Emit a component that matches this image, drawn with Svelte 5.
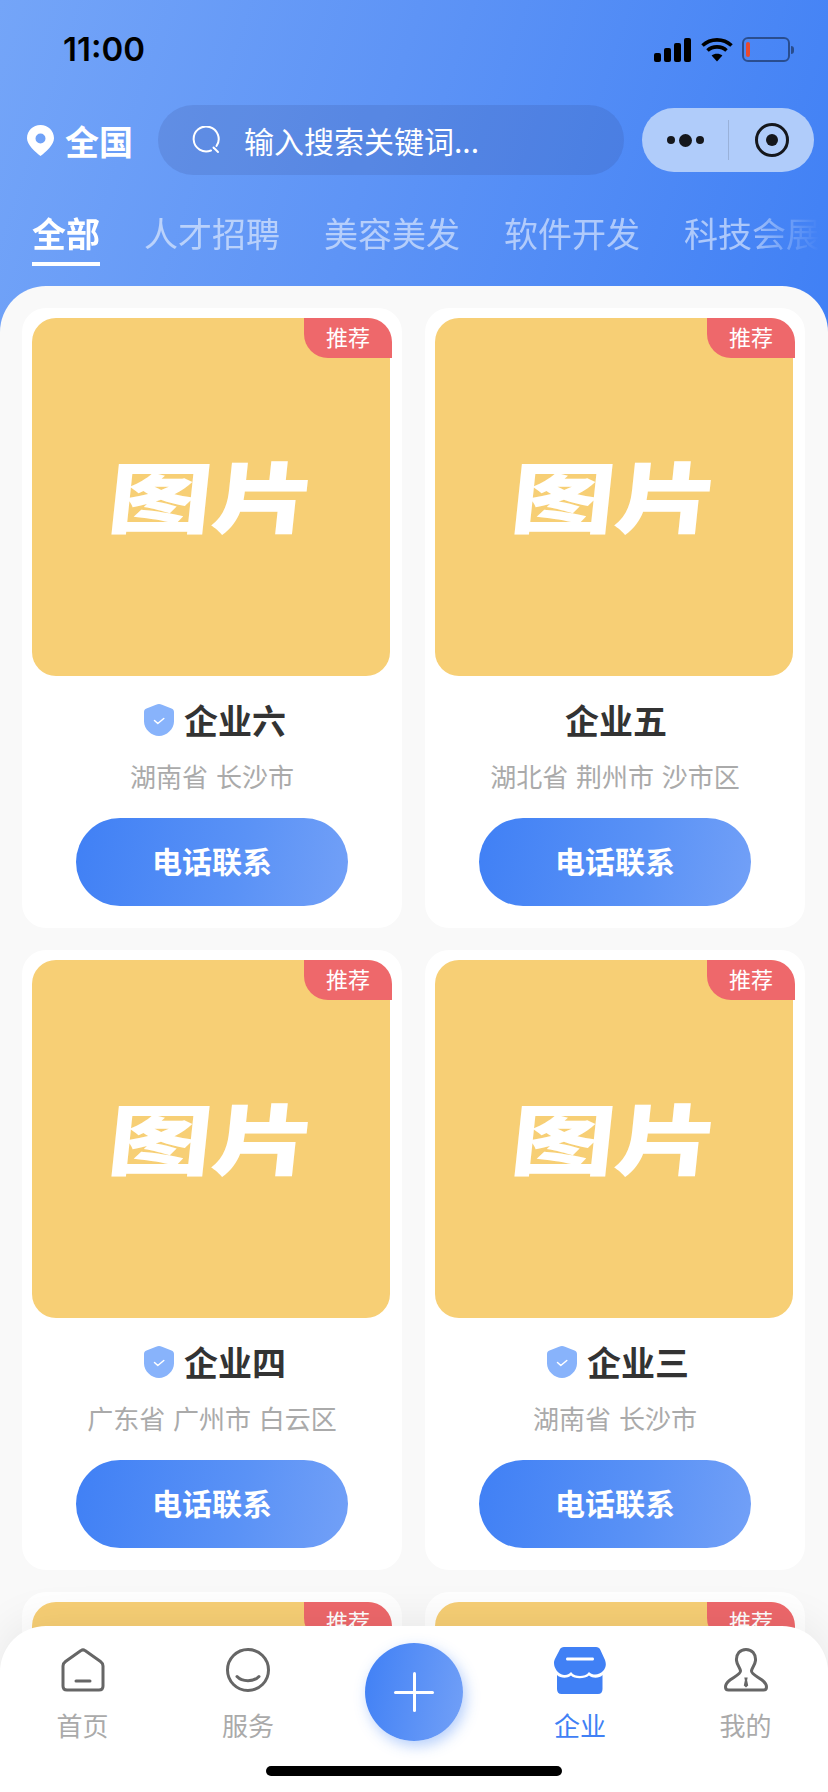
<script lang="ts">
  const tabs = ["全部", "人才招聘", "美容美发", "软件开发", "科技会展"];

  const companies = [
    { name: "企业六", area: "湖南省 长沙市", verified: true },
    { name: "企业五", area: "湖北省 荆州市 沙市区", verified: false },
    { name: "企业四", area: "广东省 广州市 白云区", verified: true },
    { name: "企业三", area: "湖南省 长沙市", verified: true },
    { name: "企业二", area: "湖南省 长沙市", verified: true },
    { name: "企业一", area: "湖南省 长沙市", verified: true }
  ];
</script>

<div class="screen">
  <header class="top">
    <div class="status">
      <span class="time">11:00</span>
      <div class="status-icons">
        <svg width="37" height="24" viewBox="0 0 37 24" fill="#000">
          <rect x="0" y="15" width="7" height="9" rx="2" />
          <rect x="10" y="10" width="7" height="14" rx="2" />
          <rect x="20" y="5" width="7" height="19" rx="2" />
          <rect x="30" y="0" width="7" height="24" rx="2" />
        </svg>
        <svg width="32" height="25" viewBox="0 0 32 25" fill="none" stroke="#000" stroke-width="3.6">
          <path d="M1.5 8.5C9.5 1 22.5 1 30.5 8.5" />
          <path d="M6.5 13.5C11.5 8.7 20.5 8.7 25.5 13.5" />
          <path d="M16 24.5L10.6 18.6C13.5 16 18.5 16 21.4 18.6Z" fill="#000" stroke="none" />
        </svg>
        <div class="battery"><i></i></div>
        <div class="battery-cap"></div>
      </div>
    </div>

    <div class="search-row">
      <div class="city">
        <svg width="27" height="31" viewBox="0 0 27 31">
          <path fill-rule="evenodd" fill="#fff" d="M13.5 0C6 0 0 5.800 0 13.200C0 20 8.500 27 13.500 31C18.500 27 27 20 27 13.200C27 5.800 21 0 13.500 0ZM13.500 8.500A5 5 0 1 1 13.500 18.500A5 5 0 1 1 13.500 8.500Z" />
        </svg>
        <span>全国</span>
      </div>
      <div class="search">
        <svg width="28" height="28" viewBox="0 0 28 28" fill="none" stroke="#fff" stroke-width="2" stroke-linecap="round">
          <path d="M24.500 20A12.500 12.500 0 1 0 19 24.500" />
          <path d="M21.500 21.500L26 26" />
        </svg>
        <span>输入搜索关键词...</span>
      </div>
      <div class="capsule">
        <div class="dots"><i></i><i class="mid"></i><i></i></div>
        <div class="split"></div>
        <div class="target"><i></i></div>
      </div>
    </div>

    <nav class="tabs">
      {#each tabs as tab, i}
        <div class="tab" class:active={i === 0}>{tab}</div>
      {/each}
    </nav>
  </header>

  <main class="sheet">
    {#each companies as c}
      <article class="card">
        <div class="photo">
          <span class="placeholder">图片</span>
          <span class="badge">推荐</span>
        </div>
        <div class="name">
          {#if c.verified}
            <svg width="30" height="32" viewBox="0 0 30 32">
              <path fill="#88b3fb" d="M15 0C16 0 17 .3 18 .7L27.500 4.600C29 5.200 30 6.200 30 8V17.500C30 25 22.500 32 15 32C7.500 32 0 25 0 17.500V8C0 6.200 1 5.200 2.500 4.600L12 .7C13 .3 14 0 15 0Z" />
              <path fill="none" stroke="#fff" stroke-width="1.500" stroke-linecap="round" stroke-linejoin="round" d="M10.500 16.500L13.800 19.500L19.800 14.500" />
            </svg>
          {/if}
          <span>{c.name}</span>
        </div>
        <div class="area">{c.area}</div>
        <button class="call">电话联系</button>
      </article>
    {/each}
  </main>

  <footer class="tabbar">
    <div class="nav-item">
      <div class="ico">
        <svg width="44" height="44" viewBox="0 0 44 44" fill="none" stroke="#666" stroke-width="3" stroke-linecap="round" stroke-linejoin="round">
          <path d="M20 2.600C21.200 1.700 22.800 1.700 24 2.600L39.500 13.500C41 14.600 42 16 42 18V38C42 40.600 40.600 42 38 42H6C3.400 42 2 40.600 2 38V18C2 16 3 14.600 4.500 13.500Z" />
          <path d="M15 33H29" />
        </svg>
      </div>
      <span>首页</span>
    </div>
    <div class="nav-item">
      <div class="ico">
        <svg width="44" height="44" viewBox="0 0 44 44" fill="none" stroke="#666" stroke-width="3" stroke-linecap="round">
          <circle cx="22" cy="22" r="20.500" />
          <path d="M11 28.500C16 34 28 34 33 28.500" />
        </svg>
      </div>
      <span>服务</span>
    </div>
    <div class="nav-item">
      <div class="plus"><i></i><i class="v"></i></div>
    </div>
    <div class="nav-item current">
      <div class="ico">
        <svg width="52" height="47" viewBox="0 0 52 47" fill="#4080f5">
          <path fill-rule="evenodd" d="M10 0H42C44 0 45.500 1 46.300 2.800L51 13C52.500 17 52 21 49 24C46 27 42 28.500 38 27C36.500 26.500 35.500 25.700 35 25C33 28 29 29 26 29C23 29 19 28 17 25C16 26.500 13 28.500 10 28C4 27.500 0 21 0 16C0 14 .6 12.800 1.300 11.300L5.700 2.800C6.500 1 8 0 10 0ZM13.500 10.500C12.500 10.500 12 11.200 12 12C12 12.800 12.500 13.500 13.500 13.500H38.500C39.500 13.500 40 12.800 40 12C40 11.200 39.500 10.500 38.500 10.500Z" />
          <path d="M3 28C6 31 13 32 17 28.500C20 32 31 32 35 28.500C39 32 46 31 48.500 28V42C48.500 45 47 47 44 47H7.500C4.500 47 3 45 3 42Z" />
        </svg>
      </div>
      <span>企业</span>
    </div>
    <div class="nav-item">
      <div class="ico">
        <svg width="44" height="44" viewBox="0 0 44 44" fill="none" stroke="#666" stroke-width="3" stroke-linejoin="round">
          <path d="M22 1.500C16 1.500 12 6 12.500 12.500C13 17 16 19.500 16.500 23C16.800 26 10 29 6 32C3.500 34 1.500 36 1.500 39C1.500 41 2.500 42 4.500 42H39.500C41.500 42 42.500 41 42.500 39C42.500 36 40.500 34 38 32C34 29 27.200 26 27.500 23C28 19.500 31 17 31.500 12.500C32 6 28 1.500 22 1.500Z" />
          <path fill="#666" stroke="none" d="M20.300 29.500H23.700L23.100 32.200L24.200 37.500L22 39.500L19.800 37.500L20.900 32.200Z" />
        </svg>
      </div>
      <span>我的</span>
    </div>
    <div class="indicator"></div>
  </footer>
</div>

<style>
  :global(body) {
    background: #f9f9f9;
  }
  .screen {
    position: relative;
    width: 828px;
    height: 1792px;
    overflow: hidden;
    font-family: "Noto Sans CJK SC", "Noto Sans", sans-serif;
  }

  .top {
    height: 340px;
    background: linear-gradient(108deg, #74a5f8 0%, #5e94f6 45%, #4080f5 100%);
  }
  .status {
    height: 88px;
    padding: 11px 34px 0 63px;
    display: flex;
    align-items: center;
    justify-content: space-between;
    box-sizing: border-box;
  }
  .time {
    font-family: Inter, sans-serif;
    font-size: 33px;
    font-weight: 600;
    color: #000;
    line-height: 1;
  }
  .status-icons {
    display: flex;
    align-items: center;
    gap: 10px;
  }
  .battery {
    width: 48px;
    height: 25px;
    margin-left: -1px;
    box-sizing: border-box;
    border: 2px solid rgba(0, 0, 0, .42);
    border-radius: 6px;
    padding: 3px 2px;
  }
  .battery i {
    display: block;
    width: 4px;
    height: 100%;
    background: #e8492f;
    border-radius: 2px;
  }
  .battery-cap {
    width: 3px;
    height: 8px;
    margin-left: -9px;
    background: rgba(0, 0, 0, .42);
    border-radius: 0 3px 3px 0;
  }

  .search-row {
    margin-top: 17px;
    height: 70px;
    display: flex;
    align-items: center;
    padding-left: 27px;
  }
  .city {
    width: 131px;
    display: flex;
    align-items: center;
    gap: 11px;
    color: #fff;
    font-size: 34px;
    font-weight: 700;
  }
  .search {
    width: 466px;
    height: 70px;
    border-radius: 35px;
    background: rgba(50, 60, 120, .15);
    display: flex;
    align-items: center;
    gap: 24px;
    padding-left: 34px;
    box-sizing: border-box;
    color: #fff;
    font-size: 30px;
  }
  .capsule {
    width: 172px;
    height: 64px;
    margin-left: 18px;
    border-radius: 32px;
    background: #b0ccfa;
    display: flex;
    align-items: center;
  }
  .dots {
    width: 86px;
    display: flex;
    align-items: center;
    justify-content: center;
    gap: 4px;
  }
  .dots i {
    width: 8px;
    height: 8px;
    border-radius: 50%;
    background: #15171c;
  }
  .dots i.mid {
    width: 13px;
    height: 13px;
  }
  .split {
    width: 1px;
    height: 40px;
    background: rgba(0, 0, 0, .13);
  }
  .target {
    width: 34px;
    height: 34px;
    margin-left: 26px;
    box-sizing: border-box;
    border: 3.500px solid #15171c;
    border-radius: 50%;
    display: flex;
    align-items: center;
    justify-content: center;
  }
  .target i {
    width: 12px;
    height: 12px;
    border-radius: 50%;
    background: #15171c;
  }

  .tabs {
    margin-top: 32px;
    padding-left: 32px;
    box-sizing: border-box;
    display: flex;
    gap: 44px;
    overflow: hidden;
    -webkit-mask-image: linear-gradient(to right, #000 90%, transparent 99%);
    mask-image: linear-gradient(to right, #000 90%, transparent 99%);
  }
  .tab {
    flex: none;
    height: 60px;
    line-height: 52px;
    font-size: 34px;
    color: rgba(255, 255, 255, .55);
  }
  .tab.active {
    color: #fff;
    font-weight: 700;
    background: linear-gradient(#fff, #fff) left 55px / 100% 4px no-repeat;
  }

  .sheet {
    margin-top: -54px;
    height: 1506px;
    box-sizing: border-box;
    padding: 22px 0 0 22px;
    background: #f9f9f9;
    border-radius: 46px 46px 0 0;
    display: grid;
    grid-template-columns: 380px 380px;
    column-gap: 23px;
    row-gap: 22px;
    align-content: start;
  }
  .card {
    height: 620px;
    box-sizing: border-box;
    padding: 10px;
    background: #fff;
    border-radius: 24px;
    display: flex;
    flex-direction: column;
    align-items: center;
  }
  .photo {
    position: relative;
    flex: none;
    width: 358px;
    height: 358px;
    align-self: flex-start;
    border-radius: 24px;
    background: #f7cf75;
    display: flex;
    align-items: center;
    justify-content: center;
  }
  .placeholder {
    color: #fff;
    font-size: 104px;
    font-weight: 900;
    line-height: 1;
    transform: skewX(-6deg) scaleY(.74);
    margin: -6px 0 0 5px;
  }
  .badge {
    position: absolute;
    top: 0;
    right: -2px;
    width: 88px;
    height: 40px;
    background: #ee686b;
    border-radius: 0 24px 0 24px;
    color: #fff;
    font-size: 22px;
    line-height: 37px;
    text-align: center;
  }
  .name {
    margin: 26px 0 0 2px;
    height: 36px;
    display: flex;
    align-items: center;
    gap: 10px;
    font-size: 34px;
    font-weight: 700;
    color: #333;
    line-height: 36px;
  }
  .name svg {
    margin-left: 4px;
  }
  .area {
    margin-top: 20px;
    height: 36px;
    line-height: 36px;
    font-size: 26px;
    word-spacing: 2px;
    color: #aaa;
  }
  .call {
    margin-top: 24px;
    width: 272px;
    height: 88px;
    flex: none;
    border: 0;
    border-radius: 44px;
    padding: 0 0 4px;
    background: linear-gradient(100deg, #4080f5 0%, #5a92f6 60%, #72a0f7 100%);
    color: #fff;
    font-family: inherit;
    font-size: 30px;
    font-weight: 700;
  }

  .tabbar {
    position: absolute;
    left: 0;
    right: 0;
    bottom: 0;
    height: 166px;
    background: #fff;
    border-radius: 46px 46px 0 0;
    box-shadow: 0 -6px 44px rgba(0, 0, 0, .07);
    display: grid;
    grid-template-columns: 165px 166px 166px 166px 165px;
  }
  .nav-item {
    box-sizing: border-box;
    height: 120px;
    padding-top: 21px;
    display: flex;
    flex-direction: column;
    align-items: center;
    gap: 14px;
    color: #aaa;
    font-size: 26px;
    line-height: 36px;
    position: relative;
  }
  .nav-item.current {
    color: #4080f5;
  }
  .ico {
    height: 46px;
    display: flex;
    align-items: center;
  }
  .plus {
    position: absolute;
    top: 17px;
    left: 34px;
    width: 98px;
    height: 98px;
    border-radius: 50%;
    background: linear-gradient(100deg, #4080f5 0%, #72a0f7 100%);
    box-shadow: 3px 5px 14px rgba(64, 128, 245, .38);
  }
  .plus i {
    position: absolute;
    left: 29px;
    top: 48px;
    width: 40px;
    height: 3px;
    border-radius: 2px;
    background: #fff;
  }
  .plus i.v {
    left: 48px;
    top: 29px;
    width: 3px;
    height: 40px;
  }
  .indicator {
    position: absolute;
    left: 266px;
    bottom: 16px;
    width: 296px;
    height: 10px;
    border-radius: 5px;
    background: #000;
  }
</style>
